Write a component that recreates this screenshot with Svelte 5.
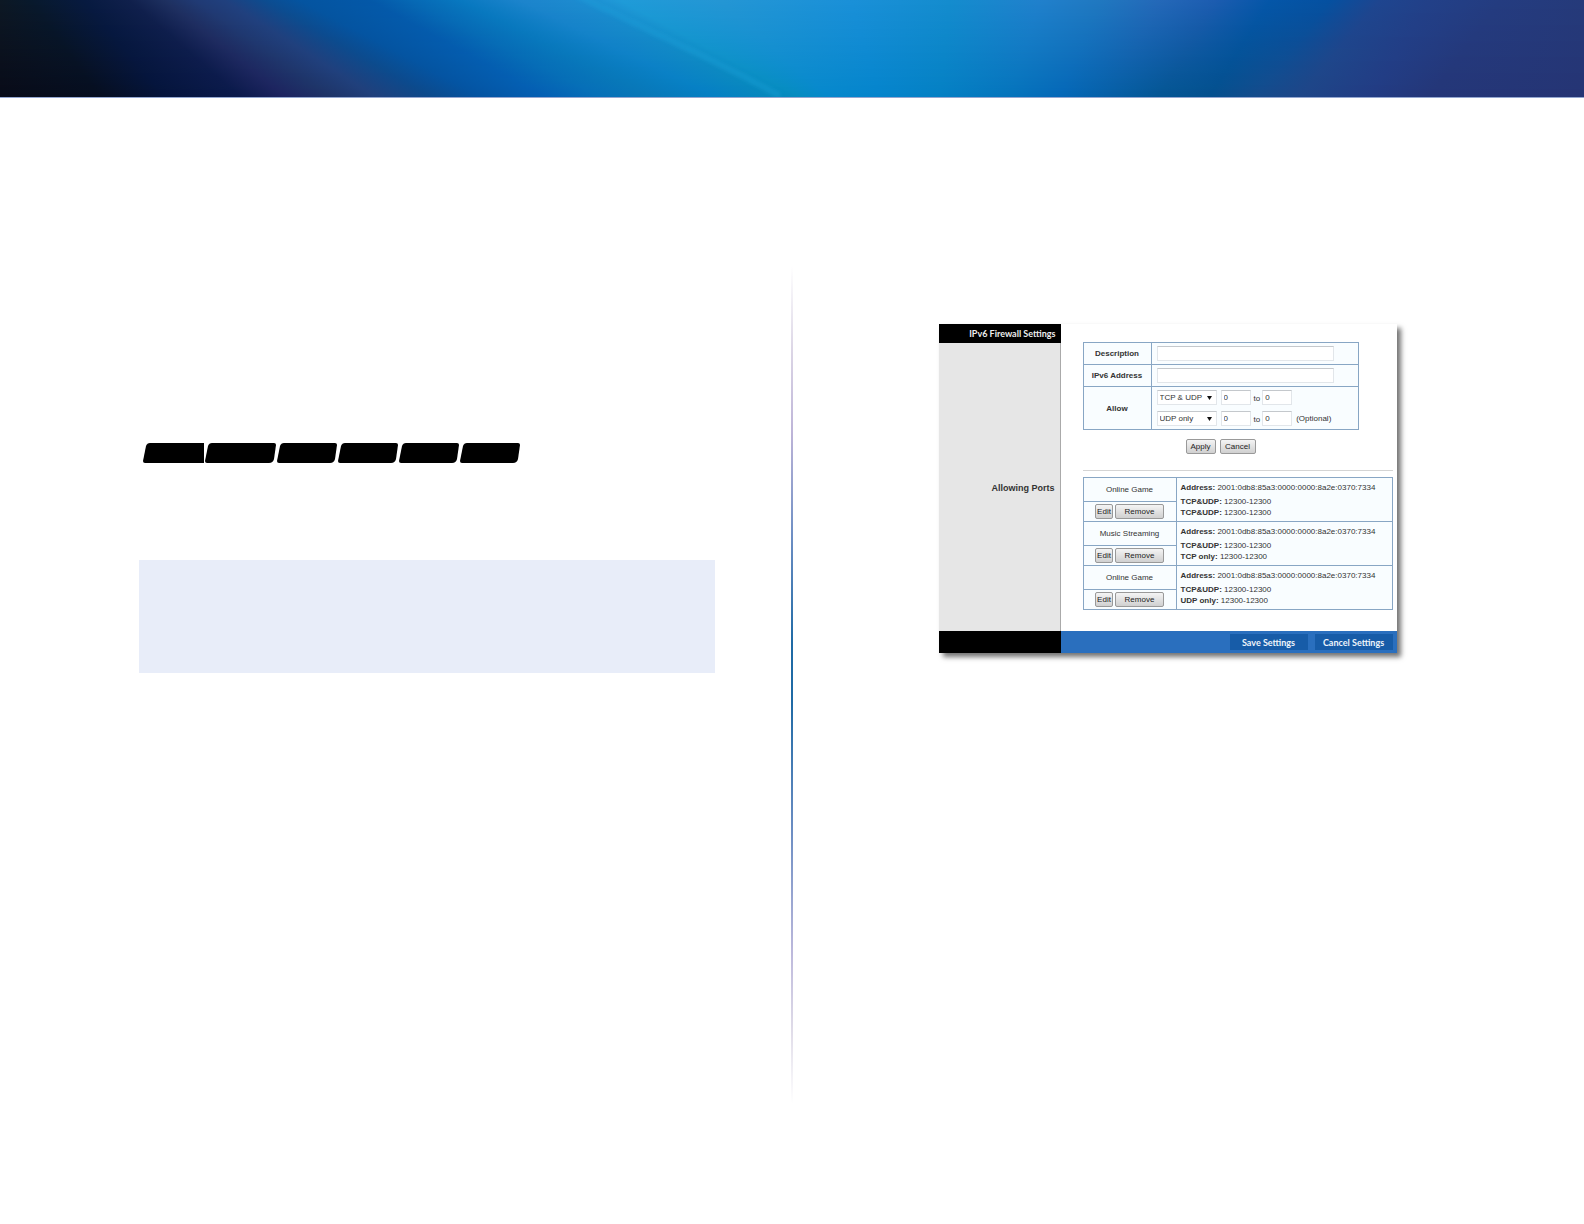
<script lang="ts">
	// x at the top edge, x at the bottom edge, colour at the top, colour at the bottom
	type Band = [number, number, string, string];

	type PortRule = {
		name: string;
		address: string;
		ports: { protocol: string; range: string }[];
	};

	const bannerWidth = 1584;
	const bannerHeight = 97;

	const bands: Band[] = [
		[0, 0, '#0d1824', '#080b18'],
		[30, 100, '#08192c', '#060e20'],
		[85, 165, '#071a40', '#05143c'],
		[130, 240, '#10204c', '#0b1a4c'],
		[165, 285, '#1e3060', '#1d2460'],
		[195, 330, '#203a74', '#1e3468'],
		[225, 375, '#20407e', '#20407c'],
		[265, 430, '#0c4c90', '#0c4a8c'],
		[300, 480, '#0454a0', '#0454a2'],
		[370, 545, '#0458a8', '#0460b4'],
		[410, 600, '#0668b4', '#0670b8'],
		[460, 650, '#0878c0', '#0878b8'],
		[520, 715, '#1c84cc', '#0480c4'],
		[585, 775, '#1d8cd0', '#0688bc'],
		[620, 800, '#1f9bd8', '#058cc0'],
		[720, 830, '#2496d4', '#0588cc'],
		[850, 880, '#1a90d8', '#0484cc'],
		[950, 940, '#148cce', '#0480c4'],
		[1040, 1010, '#2080cc', '#0474bc'],
		[1100, 1060, '#2078c0', '#0468b8'],
		[1160, 1110, '#2468b8', '#055fa6'],
		[1215, 1160, '#1c5cb0', '#045694'],
		[1270, 1210, '#0456a8', '#04508e'],
		[1330, 1255, '#0550a0', '#144c8c'],
		[1380, 1300, '#1e458f', '#1e4688'],
		[1430, 1370, '#224088', '#223c84'],
		[1500, 1430, '#243c80', '#243678'],
		[1584, 1584, '#253a7a', '#253474']
	];

	function mix(a: string, b: string, t: number) {
		const channels = [1, 3, 5].map((i) => {
			const from = parseInt(a.slice(i, i + 2), 16);
			const to = parseInt(b.slice(i, i + 2), 16);
			return Math.round(from + (to - from) * t);
		});
		return `rgb(${channels.join(',')})`;
	}

	// one gradient per pixel row, so that the bands run diagonally
	const bannerRows = Array.from({ length: bannerHeight }, (_, y) => {
		const t = y / (bannerHeight - 1);
		return bands.map(([x1, x2, c1, c2]) => ({
			offset: (x1 + (x2 - x1) * t) / bannerWidth,
			color: mix(c1, c2, t)
		}));
	});

	const tabs = [61, 71, 60, 60, 60, 60];

	function tabPath(w: number, squareEnd: boolean) {
		const left = `M2 20Q0 20 0 18L3 3Q4 0 7 0`;
		if (squareEnd) return `${left}H${w}V20Z`;
		return `${left}H${w - 2}Q${w} 0 ${w} 2L${w - 2} 16Q${w - 3} 20 ${w - 7} 20Z`;
	}

	const protocols = ['TCP & UDP', 'TCP only', 'UDP only'];

	let description = $state('');
	let ipAddress = $state('');
	let allow = $state([
		{ protocol: 'TCP & UDP', from: '0', to: '0', optional: false },
		{ protocol: 'UDP only', from: '0', to: '0', optional: true }
	]);

	const address = '2001:0db8:85a3:0000:0000:8a2e:0370:7334';
	const range = '12300-12300';

	const rules: PortRule[] = [
		{
			name: 'Online Game',
			address,
			ports: [
				{ protocol: 'TCP&UDP:', range },
				{ protocol: 'TCP&UDP:', range }
			]
		},
		{
			name: 'Music Streaming',
			address,
			ports: [
				{ protocol: 'TCP&UDP:', range },
				{ protocol: 'TCP only:', range }
			]
		},
		{
			name: 'Online Game',
			address,
			ports: [
				{ protocol: 'TCP&UDP:', range },
				{ protocol: 'UDP only:', range }
			]
		}
	];
</script>

<div class="page">
	<header class="banner">
		<svg viewBox="0 0 1584 97" preserveAspectRatio="none" aria-hidden="true">
			<defs>
				{#each bannerRows as stops, y}
					<linearGradient id="row-{y}">
						{#each stops as stop}
							<stop offset={stop.offset} stop-color={stop.color} />
						{/each}
					</linearGradient>
				{/each}
				<filter id="soft"><feGaussianBlur stdDeviation="2" /></filter>
			</defs>
			{#each bannerRows as _, y}
				<rect {y} width={bannerWidth} height="1" fill="url(#row-{y})" />
			{/each}
			<path
				d="M578 -4Q640 26 690 50T780 96"
				fill="none"
				stroke="#1da6de"
				stroke-width="5"
				opacity="0.4"
				filter="url(#soft)"
			/>
		</svg>
	</header>

	<main>
		<section class="left">
			<div class="tabs">
				{#each tabs as w, i}
					<svg width={w} height="20" viewBox="0 0 {w} 20" aria-hidden="true">
						<path d={tabPath(w, i === 0)} />
					</svg>
				{/each}
			</div>
			<div class="note"></div>
		</section>

		<div class="divider"></div>

		<section class="right">
			<form class="firewall" onsubmit={(e) => e.preventDefault()}>
				<aside class="sidebar">
					<h1>IPv6 Firewall Settings</h1>
					<h2>Allowing Ports</h2>
				</aside>

				<div class="content">
					<table class="settings">
						<tbody>
							<tr>
								<th><label for="description">Description</label></th>
								<td><input class="wide" type="text" id="description" bind:value={description} /></td>
							</tr>
							<tr>
								<th><label for="ip-address">IPv6 Address</label></th>
								<td><input class="wide" type="text" id="ip-address" bind:value={ipAddress} /></td>
							</tr>
							<tr class="allow">
								<th>Allow</th>
								<td>
									{#each allow as entry, i}
										<div class="allow-row">
											<select aria-label="Protocol" bind:value={entry.protocol}>
												{#each protocols as protocol}
													<option>{protocol}</option>
												{/each}
											</select>
											<input class="port" type="text" aria-label="First port" bind:value={entry.from} />
											<label for="to-{i}">to</label>
											<input class="port" type="text" id="to-{i}" bind:value={entry.to} />
											{#if entry.optional}
												<span class="optional">(Optional)</span>
											{/if}
										</div>
									{/each}
								</td>
							</tr>
						</tbody>
					</table>

					<div class="actions">
						<button class="small apply" type="submit">Apply</button>
						<button class="small cancel" type="button">Cancel</button>
					</div>

					<hr />

					<table class="rules">
						<tbody>
							{#each rules as rule}
								<tr class="name-row">
									<td class="name">{rule.name}</td>
									<td class="detail" rowspan="2">
										<p class="address"><b>Address:</b> {rule.address}</p>
										{#each rule.ports as port}
											<p><b>{port.protocol}</b> {port.range}</p>
										{/each}
									</td>
								</tr>
								<tr class="button-row">
									<td>
										<div class="rule-buttons">
											<button class="small edit" type="button">Edit</button>
											<button class="small remove" type="button">Remove</button>
										</div>
									</td>
								</tr>
							{/each}
						</tbody>
					</table>
				</div>

				<div class="footer-left"></div>
				<div class="footer">
					<button class="save" type="submit">Save Settings</button>
					<button class="save" type="button">Cancel Settings</button>
				</div>
			</form>
		</section>
	</main>
</div>

<style>
	:global(body) {
		margin: 0;
		background: #fff;
	}

	.page {
		display: flex;
		flex-direction: column;
		min-height: 100vh;
		font-family: 'Liberation Sans', Arial, sans-serif;
		font-size: 8px;
		line-height: 11px;
		color: #333;
	}

	.banner {
		height: 97px;
		border-bottom: 1px solid #93a6d0;
	}

	.banner svg {
		display: block;
		width: 100%;
		height: 100%;
		shape-rendering: crispEdges;
	}

	main {
		flex: 1;
		display: grid;
		grid-template-columns: 1fr 2px 1fr;
		padding: 168px 0 120px;
	}

	.left {
		padding: 177px 76px 0 139px;
	}

	.tabs {
		display: flex;
		gap: 1px;
		padding-left: 4px;
	}

	.note {
		height: 113px;
		margin-top: 97px;
		background: #e8edf9;
	}

	.divider {
		background: linear-gradient(
			#fff,
			#dcd6e6 10%,
			#bdb4d8 20%,
			#6f8fc4 32%,
			#1f6aa5 45%,
			#1f6aa5 52%,
			#6f8fc4 68%,
			#bdb9dc 82%,
			#dfdbe8 91%,
			#fff
		);
	}

	.right {
		padding: 58px 116px 0 74px;
	}

	.firewall {
		display: grid;
		grid-template-columns: 122px 1fr;
		grid-template-rows: 1fr 22px;
		width: 458px;
		margin: 0 auto;
		background: #fff;
		box-shadow: 4px 4px 5px rgba(0, 0, 0, 0.55);
	}

	.sidebar {
		border-right: 1px solid #aaa;
		background: #e6e6e6;
		text-align: right;
	}

	h1,
	h2 {
		margin: 0;
		padding-right: 5px;
		font-size: 9px;
	}

	h1 {
		margin-right: -1px;
		background: #000;
		color: #eee;
		font-family: Lato, sans-serif;
		line-height: 19px;
	}

	h2 {
		margin-top: 139px;
		line-height: 12px;
	}

	.content {
		padding: 18px 4px 21px 22px;
	}

	table {
		border-collapse: collapse;
		table-layout: fixed;
		background: #f9fdff;
	}

	th,
	td {
		box-sizing: border-box;
		padding: 0;
		border: 1px solid #88a6c4;
	}

	.settings {
		width: 276px;
	}

	.settings tr {
		height: 22px;
	}

	.settings .allow {
		height: 43px;
	}

	.settings th {
		width: 68px;
	}

	.settings td {
		padding-left: 5px;
	}

	input,
	select {
		box-sizing: border-box;
		height: 15px;
		margin: 0;
		padding: 0 2px;
		border: 1px solid #e2e6ea;
		border-top-color: #c4c8cc;
		border-radius: 0;
		background: #fff;
		color: #333;
		font: inherit;
	}

	.wide {
		display: block;
		width: 177px;
	}

	.allow-row {
		display: flex;
		align-items: center;
		height: 21px;
	}

	select {
		appearance: none;
		width: 60px;
		margin-right: 4px;
		background: #fff
			url("data:image/svg+xml,%3Csvg xmlns='http://www.w3.org/2000/svg' width='5' height='4'%3E%3Cpath d='M0 0h5L2.5 4z' fill='%23111'/%3E%3C/svg%3E")
			no-repeat right 4px center;
	}

	.port {
		width: 30px;
	}

	.allow-row label {
		padding: 2px 2px 0 3px;
	}

	.optional {
		margin-left: 4px;
	}

	.actions {
		display: flex;
		gap: 4px;
		padding: 9px 0 0 103px;
	}

	button {
		padding: 0;
		font: inherit;
		cursor: pointer;
	}

	.small {
		height: 15px;
		border: 1px solid #999;
		border-radius: 2px;
		background: linear-gradient(#f4f4f4, #d0d0d0);
		color: #222;
		line-height: 12px;
	}

	.apply {
		width: 30px;
	}

	.cancel {
		width: 36px;
	}

	hr {
		margin: 16px 0 6px;
		border: 0;
		border-top: 1px solid #d4d4d4;
	}

	.rules {
		width: 310px;
	}

	.name-row {
		height: 24px;
	}

	.button-row {
		height: 20px;
	}

	.name {
		width: 93px;
		text-align: center;
	}

	.detail {
		padding: 0 0 0 4px;
	}

	.detail p {
		margin: 0;
	}

	.detail .address {
		margin-bottom: 3px;
	}

	.rule-buttons {
		display: flex;
		justify-content: center;
		gap: 2px;
	}

	.edit {
		width: 18px;
	}

	.remove {
		width: 49px;
	}

	.footer-left {
		background: #000;
	}

	.footer {
		display: flex;
		align-items: center;
		justify-content: flex-end;
		gap: 7px;
		padding-right: 4px;
		background: #2a6fbe;
	}

	.save {
		width: 78px;
		height: 16px;
		border: 0;
		background: #175ca8;
		color: #eef4fb;
		font-family: Lato, sans-serif;
		font-size: 9px;
		font-weight: 700;
	}
</style>
